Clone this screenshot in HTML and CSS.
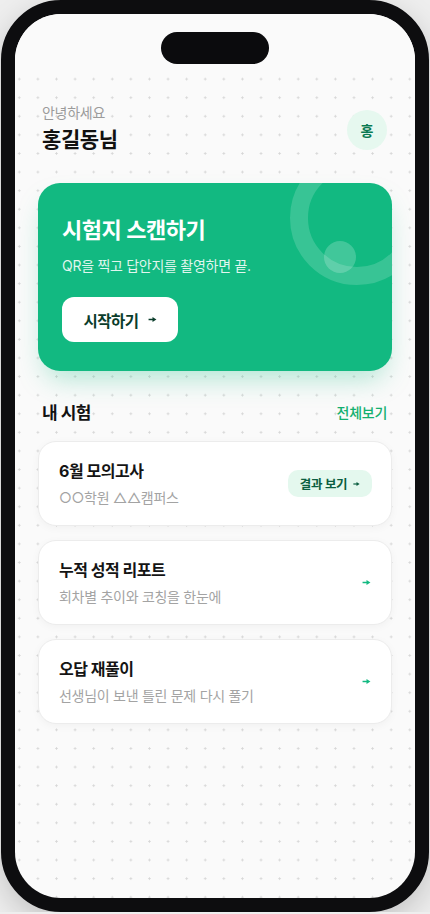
FILE: index.html
```html
<!DOCTYPE html>
<html lang="ko">
<head>
  <meta charset="UTF-8">
  <meta name="viewport" content="width=device-width, initial-scale=1.0">
  <title>시험지 스캔</title>
  <link rel="stylesheet" href="styles.css">
</head>
<body>
  <div class="phone">
    <div class="screen">
      <div class="status">
        <div class="island"></div>
      </div>

      <main class="content">
        <header class="greet">
          <div>
            <p class="hello">안녕하세요</p>
            <h1 class="name">홍길동님</h1>
          </div>
          <div class="avatar">홍</div>
        </header>

        <section class="scan">
          <span class="ring"></span>
          <span class="bubble"></span>
          <h2 class="scan-title">시험지 스캔하기</h2>
          <p class="scan-text">QR을 찍고 답안지를 촬영하면 끝.</p>
          <button class="start" type="button">시작하기
            <svg class="arrow" viewBox="0 0 10 8"><path d="M0.5 4H6" /><path class="head" d="M5 1.2L9.5 4L5 6.8Z" /></svg>
          </button>
        </section>

        <div class="section-head">
          <h3>내 시험</h3>
          <a href="#all">전체보기</a>
        </div>

        <ul class="exam-list">
          <li class="exam-card">
            <div>
              <p class="exam-title">6월 모의고사</p>
              <p class="exam-sub">○○학원 △△캠퍼스</p>
            </div>
            <span class="badge">결과 보기
              <svg class="arrow" viewBox="0 0 10 8"><path d="M0.5 4H6" /><path class="head" d="M5 1.2L9.5 4L5 6.8Z" /></svg>
            </span>
          </li>
          <li class="exam-card">
            <div>
              <p class="exam-title">누적 성적 리포트</p>
              <p class="exam-sub">회차별 추이와 코칭을 한눈에</p>
            </div>
            <svg class="arrow go" viewBox="0 0 10 8"><path d="M0.5 4H6" /><path class="head" d="M5 1.2L9.5 4L5 6.8Z" /></svg>
          </li>
          <li class="exam-card">
            <div>
              <p class="exam-title">오답 재풀이</p>
              <p class="exam-sub">선생님이 보낸 틀린 문제 다시 풀기</p>
            </div>
            <svg class="arrow go" viewBox="0 0 10 8"><path d="M0.5 4H6" /><path class="head" d="M5 1.2L9.5 4L5 6.8Z" /></svg>
          </li>
        </ul>
      </main>
    </div>
  </div>
</body>
</html>
```

FILE: styles.css
```css
body {
  margin: 0;
  padding: 0;
  background-color: #eeeeee;
  font-family: Inter, "Noto Sans CJK KR", sans-serif;
  color: #151515;
}

p, h1, h2, h3 {
  margin: 0;
}

.phone {
  width: 428px;
  height: 912px;
  margin: 0 auto;
  box-sizing: border-box;
  border: 14px solid #0d0d0f;
  border-radius: 60px;
  background-color: #0d0d0f;
  box-shadow: 0 10px 30px rgba(0, 0, 0, 0.18);
}

.screen {
  height: 100%;
  border-radius: 46px;
  overflow: hidden;
  background-color: #fafafa;
  background-image: radial-gradient(circle, #d6d6d6 0.9px, transparent 1.3px);
  background-size: 18.6px 18.6px;
  background-position: -5px 0;
}

.status {
  height: 50px;
  background-color: #fafafa;
  display: flex;
  justify-content: center;
  padding-top: 18px;
  box-sizing: border-box;
}

.island {
  width: 108px;
  height: 32px;
  border-radius: 16px;
  background-color: #0b0b0d;
}

.content {
  padding: 39px 23px 0;
}

/* arrow icon */
.arrow {
  width: 9px;
  height: 7px;
  fill: none;
  stroke: currentColor;
  stroke-width: 1.7;
}

.arrow .head {
  fill: currentColor;
  stroke: none;
}

/* greeting */
.greet {
  display: flex;
  justify-content: space-between;
  align-items: center;
  padding: 0 5px 0 4px;
}

.hello {
  font-size: 14px;
  line-height: 20px;
  color: #9b9b9b;
  letter-spacing: -0.02em;
}

.name {
  margin-top: 3px;
  font-size: 21px;
  line-height: 28px;
  font-weight: 700;
  letter-spacing: -0.02em;
  color: #111;
}

.avatar {
  width: 40px;
  height: 40px;
  margin-top: 3px;
  border-radius: 50%;
  background-color: #e6f8ef;
  color: #0b7a52;
  font-size: 14px;
  font-weight: 700;
  display: flex;
  align-items: center;
  justify-content: center;
}

/* scan card */
.scan {
  position: relative;
  overflow: hidden;
  margin-top: 29px;
  padding: 31px 24px 29px;
  border-radius: 22px;
  background-color: #12b981;
  color: #fff;
  box-shadow: 0 14px 28px -8px rgba(16, 185, 129, 0.35);
}

.ring {
  position: absolute;
  top: -32px;
  right: -32px;
  width: 134px;
  height: 134px;
  box-sizing: border-box;
  border: 18px solid rgba(255, 255, 255, 0.16);
  border-radius: 50%;
}

.bubble {
  position: absolute;
  top: 58px;
  left: 286px;
  width: 32px;
  height: 32px;
  border-radius: 50%;
  background-color: rgba(255, 255, 255, 0.2);
}

.scan-title {
  position: relative;
  font-size: 22px;
  line-height: 32px;
  font-weight: 700;
  letter-spacing: -0.02em;
}

.scan-text {
  position: relative;
  margin-top: 10px;
  font-size: 14px;
  line-height: 20px;
  letter-spacing: -0.02em;
  color: rgba(255, 255, 255, 0.88);
}

.start {
  position: relative;
  margin-top: 21px;
  width: 116px;
  height: 45px;
  border: none;
  border-radius: 12px;
  background-color: #fff;
  color: #0a3d2b;
  font-family: inherit;
  font-size: 15.5px;
  font-weight: 700;
  letter-spacing: -0.03em;
  display: flex;
  align-items: center;
  justify-content: center;
  gap: 9px;
  cursor: pointer;
}

/* list */
.section-head {
  display: flex;
  justify-content: space-between;
  align-items: center;
  margin-top: 30px;
  padding: 0 5px 0 4px;
  line-height: 24px;
}

.section-head h3 {
  font-size: 17px;
  font-weight: 700;
  letter-spacing: -0.03em;
  color: #111;
}

.section-head a {
  font-size: 14px;
  font-weight: 500;
  color: #12b06f;
  text-decoration: none;
  letter-spacing: -0.02em;
}

.exam-list {
  list-style: none;
  margin: 16px 0 0;
  padding: 0;
  display: flex;
  flex-direction: column;
  gap: 14px;
}

.exam-card {
  height: 85px;
  box-sizing: border-box;
  padding: 0 19px 0 20px;
  display: flex;
  align-items: center;
  justify-content: space-between;
  background-color: #fff;
  border: 1px solid #ececec;
  border-radius: 18px;
  box-shadow: 0 2px 8px rgba(0, 0, 0, 0.04);
}

.exam-title {
  font-size: 16px;
  line-height: 22px;
  font-weight: 700;
  letter-spacing: -0.03em;
  color: #141414;
}

.exam-sub {
  margin-top: 6px;
  font-size: 14px;
  line-height: 20px;
  letter-spacing: -0.02em;
  color: #a3a3a3;
}

.badge {
  width: 84px;
  height: 27px;
  border-radius: 10px;
  background-color: #e4f8ee;
  color: #0b5e40;
  font-size: 12.5px;
  font-weight: 600;
  letter-spacing: -0.03em;
  display: flex;
  align-items: center;
  justify-content: center;
  gap: 6px;
}

.badge .arrow {
  width: 7px;
  height: 6px;
}

.go {
  color: #12b981;
  margin-right: 1px;
}
```
